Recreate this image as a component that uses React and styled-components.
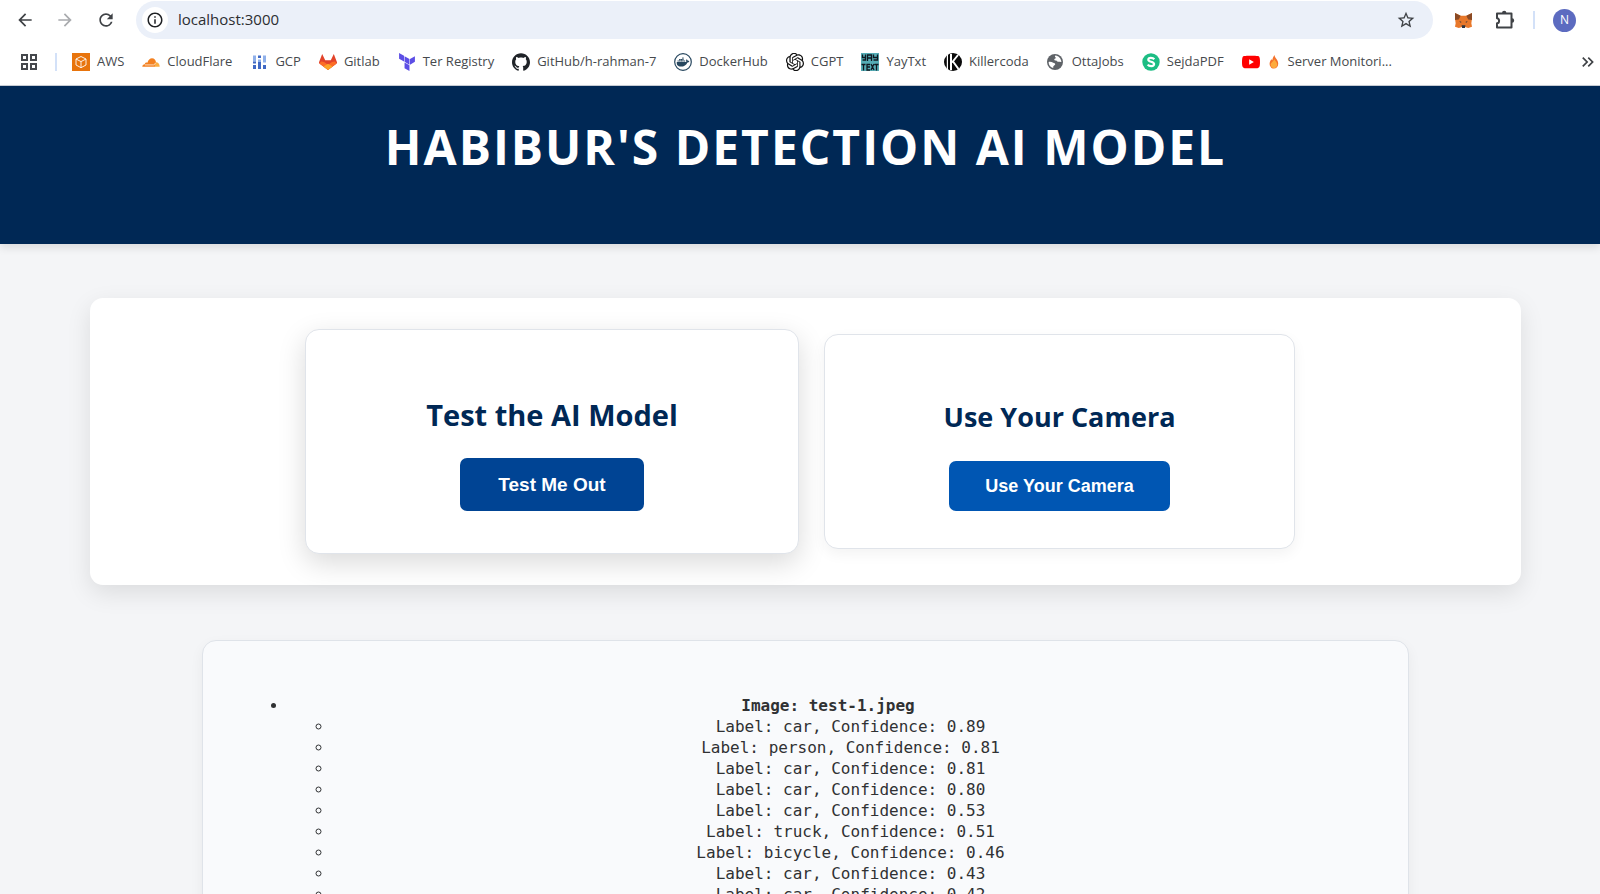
import React from "react";
import styled, { createGlobalStyle } from "styled-components";
import { SiTerraform, SiGithub, SiYoutube } from "react-icons/si";
import { FaDocker } from "react-icons/fa";
import { RiOpenaiFill } from "react-icons/ri";
import { MdStarBorder, MdRefresh, MdArrowBack, MdArrowForward, MdOutlineInfo, MdKeyboardDoubleArrowRight } from "react-icons/md";

const Global = createGlobalStyle`
  * { box-sizing: border-box; }
  html { overflow: hidden; }
  body {
    margin: 0;
    background: #f4f5f7;
    color: #303133;
    font-family: "Open Sans", "Noto Sans", sans-serif;
  }
`;

const Browser = styled.div`
  background: #fff;
  border-bottom: 1px solid #c9ced6;
`;

const Toolbar = styled.div`
  display: flex;
  align-items: center;
  height: 40px;
  padding: 0 24px 0 13px;
`;

const IconButton = styled.button`
  display: flex;
  align-items: center;
  justify-content: center;
  flex: none;
  width: 24px;
  height: 24px;
  margin-right: ${(p) => p.$gap || 0}px;
  padding: 0;
  border: 0;
  background: none;
  color: ${(p) => (p.disabled ? "#a9abae" : "#3f4246")};
  font-size: 20px;
`;

const AddressBar = styled.div`
  display: flex;
  align-items: center;
  flex: 1;
  height: 38px;
  margin-right: 18px;
  padding: 0 15px 0 6px;
  border-radius: 19px;
  background: #ebf0f9;
`;

const SiteInfo = styled.button`
  display: flex;
  align-items: center;
  justify-content: center;
  width: 26px;
  height: 26px;
  padding: 0;
  border: 0;
  border-radius: 50%;
  background: #fff;
  color: #1f2124;
  font-size: 18px;
`;

const Address = styled.input`
  flex: 1;
  min-width: 0;
  padding: 0 0 2px 10px;
  border: 0;
  outline: 0;
  background: none;
  color: #2c2e31;
  font: 15px/20px "Open Sans", "Noto Sans", sans-serif;
`;

const Divider = styled.span`
  flex: none;
  width: 2px;
  height: 18px;
  margin-right: ${(p) => p.$gap}px;
  background: #d3e1f8;
`;

const Avatar = styled.button`
  flex: none;
  width: 23px;
  height: 23px;
  padding: 0;
  border: 0;
  border-radius: 50%;
  background: #5c6bc0;
  color: #fff;
  font: 12px/22px "Open Sans", sans-serif;
`;

const Bookmarks = styled.nav`
  display: flex;
  align-items: center;
  height: 45px;
  padding: 0 0 1px 17px;
`;

const BookmarkList = styled.div`
  display: flex;
  align-items: center;
  gap: 18px;
  flex: 1;
`;

const Bookmark = styled.a`
  display: flex;
  align-items: center;
  gap: 7px;
  color: #46494d;
  font-size: 13px;
  line-height: 20px;
  white-space: nowrap;
  text-decoration: none;

  > svg {
    flex: none;
    width: 18px;
    height: 18px;
  }
`;

const BookmarkLabel = styled.span`
  display: flex;
  align-items: center;
  gap: 7px;
  padding-bottom: 2px;
`;

const Header = styled.header`
  height: 158px;
  padding: 27px 0 0 11px;
  background: #002855;
  box-shadow: 0 4px 8px rgba(0, 0, 0, 0.1);
  text-align: center;
`;

const Title = styled.h1`
  margin: 0;
  color: #fff;
  font-size: 48px;
  line-height: 68px;
  font-weight: 700;
  letter-spacing: 2px;
  text-transform: uppercase;
`;

const Main = styled.main`
  padding: 54px 79px 0 90px;
`;

const Panel = styled.section`
  display: flex;
  align-items: center;
  justify-content: center;
  gap: 25px;
  height: 287px;
  padding-right: 11px;
  border-radius: 13px;
  background: #fff;
  box-shadow: 0 8px 24px rgba(0, 0, 0, 0.1);
`;

const Card = styled.article`
  display: flex;
  flex-direction: column;
  align-items: center;
  justify-content: flex-end;
  width: ${(p) => (p.$raised ? 494 : 471)}px;
  height: ${(p) => (p.$raised ? 225 : 215)}px;
  padding-bottom: ${(p) => (p.$raised ? 42 : 37)}px;
  border: 1px solid #e0e4ea;
  border-radius: 14px;
  background: #fff;
  box-shadow: ${(p) => (p.$raised ? "0 9px 28px rgba(0, 0, 0, 0.15)" : "0 5px 14px rgba(0, 0, 0, 0.05)")};
`;

const CardTitle = styled.h2`
  margin: 0 0 ${(p) => (p.$raised ? 23 : 24)}px;
  color: #002855;
  font-size: ${(p) => (p.$raised ? 29 : 27)}px;
  line-height: 40px;
  font-weight: 700;
`;

const Action = styled.button`
  height: ${(p) => (p.$raised ? 53 : 50)}px;
  padding: 0 ${(p) => (p.$raised ? 38 : 36)}px;
  border: 0;
  border-radius: 7px;
  background: ${(p) => (p.$raised ? "#004494" : "#0056b3")};
  color: #fff;
  font: 700 ${(p) => (p.$raised ? 19 : 18)}px "Liberation Sans", Arial, sans-serif;
`;

const Results = styled.section`
  margin: 55px 112px 0;
  padding: 54px 40px;
  border: 1px solid #dfe3e9;
  border-radius: 14px;
  background: #f9fafc;
  box-shadow: 0 5px 14px rgba(0, 0, 0, 0.05);
`;

const List = styled.ul`
  margin: 0;
  padding-left: 45px;
  text-align: center;
  font: 16px/21px "DejaVu Sans Mono", monospace;
`;

const CubeIcon = () => (
  <svg viewBox="0 0 18 18">
    <rect width="18" height="18" fill="#e8740c" />
    <path d="M9 3.500 14 6v6L9 14.700 4 12V6zM4 6l5 2.600L14 6M9 8.600v6.100" fill="none" stroke="#fff" strokeWidth=".9" />
  </svg>
);
const CloudIcon = () => (
  <svg viewBox="0 0 18 18">
    <path d="M.3 13.800c0-1.500 1-2.500 2.500-2.600.1-1.500 1.500-2.200 2.600-1.500C6.200 6.700 8 5.200 10 5.200c2.300 0 3.800 1.700 4 4l-1 4.600z" fill="#f38020" />
    <path d="m12.400 13.800 1.300-4.500c2.300-.2 4 1.700 4 4.500z" fill="#fbad41" />
    <path d="M3 11.900h8.500c1 0 1.400-.8 1.800-2" fill="none" stroke="#fff" strokeWidth=".7" />
  </svg>
);
const GcpIcon = () => (
  <svg viewBox="0 0 18 18">
    <path d="M3 2.500h3v6H3zM8 6.500h3v3H8zM13 2.500h3v7h-3z" fill="#8fb0ea" />
    <path d="M3 8.500h3v2H3zM3 12h3v4H3zM8 2.500h3v2.500H8zM8 9h3v7H8zM13 12h3v4h-3z" fill="#3f68c4" />
  </svg>
);
const GitlabIcon = () => (
  <svg viewBox="0 0 18 18">
    <path d="M9 17 .6 10.700a1.500 1.500 0 0 1-.5-1.700L3.200 1l3 6.200h5.600l3-6.200 3.100 8a1.500 1.500 0 0 1-.5 1.700z" fill="#e2432a" />
    <path d="M9 17 .5 10.600 2 8.500c3 0 5 1.800 7 3.500 2-1.700 4-3.500 7-3.500l1.500 2.100z" fill="#fc6d26" />
    <path d="M9 17l-4.500-3.400L9 10.800l4.500 2.800z" fill="#fca326" />
  </svg>
);
const YayIcon = () => (
  <svg viewBox="0 0 18 18">
    <rect width="18" height="18" fill="#55acb5" />
    <path d="M1.500 1.500v3h3v-3M4.500 4v3h-3M6.500 8V2h4v6M6.500 5h4M12.500 1.500v3h4v-3M16.500 4v3h-4" fill="none" stroke="#101820" strokeWidth="1.300" />
    <path d="M.5 11.500h4M2.500 11.500v6M9 11.500H6v5.500h3M6 14h3M10 11l3 6M13 11l-3 6M13.500 11.500h4M15.500 11.500v6" fill="none" stroke="#101820" strokeWidth="1.300" />
  </svg>
);
const KillerIcon = () => (
  <svg viewBox="0 0 18 18">
    <circle cx="9" cy="9" r="9" fill="#0b0b0b" />
    <path d="M3.400 2v14" stroke="#fff" strokeWidth="1.200" />
    <path d="M7 1v16M8 9.500 14 2M9 8.500l5.500 7.500" stroke="#fff" strokeWidth="2" fill="none" />
  </svg>
);
const GlobeIcon = () => (
  <svg viewBox="0 0 18 18">
    <circle cx="8" cy="9" r="8" fill="#5f6368" />
    <path d="M8.500 2.600c-1 .6-.6 1.600.2 1.900.3.900-.6 1.300-1.400 1.500-.2 1.300.8 1.600 2 1.500.8.900 1.700 1.500 3 1.200l2.100.4C14.200 5.800 11.800 3 8.500 2.600zM1.600 8.900c1.500-.3 3.300-.1 4.600.9 1 .2 2.200.5 2 1.600-.4 1-1.700 1-1.900 2.100l-.1 1.600C3.500 14.400 1.600 12 1.600 8.900z" fill="#fff" />
  </svg>
);
const SejdaIcon = () => (
  <svg viewBox="0 0 18 18">
    <circle cx="9" cy="9" r="8.700" fill="#1dbd84" />
    <path d="M12.300 6.200C11 4.600 6.300 4 6.300 6.700c0 2.600 5.800 1.600 5.800 4.400 0 2.900-5 2.500-6.400.6" fill="none" stroke="#fff" strokeWidth="2.200" />
  </svg>
);
const FlameIcon = () => (
  <svg viewBox="2 1 14 16" width="14" height="15">
    <path d="M9.500 2c.5 3.500 4 5 4 9.300 0 3.100-2 5.200-4.600 5.200s-4.600-2.100-4.600-5c0-2 1-3.600 1.800-4.800l1.100 1C7.400 6 8 4 9.500 2z" fill="#f4722b" />
    <path d="M9.200 6.500c1 1.900 3.200 3 3.200 5.600 0 2.200-1.500 3.900-3.500 3.900s-3.500-1.600-3.500-3.700c0-2.100 3.100-3.300 3.800-5.800z" fill="#fdab3d" />
  </svg>
);
const DockerIcon = () => (
  <svg viewBox="0 0 18 18">
    <circle cx="9" cy="9" r="8.300" fill="#fff" stroke="#27475f" strokeWidth="1.200" />
    <g transform="translate(2.500 2.500)"><FaDocker size={13} color="#27475f" /></g>
  </svg>
);
const OpenAiIcon = () => (
  <svg viewBox="0 0 18 18">
    <g transform="translate(-2 -2)"><RiOpenaiFill size={22} color="#111" /></g>
  </svg>
);
const FoxIcon = () => (
  <svg viewBox="0 0 20 18" width="19" height="17">
    <path d="M1 1l6 3h6l6-3v6l-.7 5 .7 3.500-4 1.500-3.500-1L11.500 17h-3L8.500 16 5 17l-4-1.500L1.700 12 1 7z" fill="#e8782a" />
    <path d="M1 1l6 3-2 4-4 .5zM19 1l-6 3 2 4 4 .5z" fill="#8b4a24" />
    <path d="M5.500 9.500l2.500 1-1 1zM14.500 9.500l-2.500 1 1 1zM8 14h4l-.5 3h-3z" fill="#2b3440" />
  </svg>
);
const PuzzleIcon = () => (
  <svg viewBox="0 0 20 20" width="20" height="20">
    <path d="M2 3.500h14.500V17.500H2v-4.200c2.800 0 2.800-5.100 0-5.100z" fill="none" stroke="#3f4246" strokeWidth="2" strokeLinejoin="round" />
    <path d="M7 3a2.200 2.200 0 0 1 4.400 0zM17 8.300a2.200 2.200 0 0 1 0 4.400z" fill="#3f4246" />
  </svg>
);
const AppsIcon = () => (
  <svg viewBox="0 0 18 18" width="18" height="18">
    <path d="M2 2h5v5H2zM11 2h5v5h-5zM2 11h5v5H2zM11 11h5v5h-5z" fill="none" stroke="#45484c" strokeWidth="2" />
  </svg>
);

const bookmarks = [
  ["AWS", <CubeIcon />],
  ["CloudFlare", <CloudIcon />],
  ["GCP", <GcpIcon />],
  ["Gitlab", <GitlabIcon />],
  ["Ter Registry", <SiTerraform color="#5c4ee5" />],
  ["GitHub/h-rahman-7", <SiGithub color="#1f2328" />],
  ["DockerHub", <DockerIcon />],
  ["CGPT", <OpenAiIcon />],
  ["YayTxt", <YayIcon />],
  ["Killercoda", <KillerIcon />],
  ["OttaJobs", <GlobeIcon />],
  ["SejdaPDF", <SejdaIcon />],
  ["Server Monitori...", <SiYoutube color="#f00" />, <FlameIcon />],
];

const detections = [
  ["car", "0.89"],
  ["person", "0.81"],
  ["car", "0.81"],
  ["car", "0.80"],
  ["car", "0.53"],
  ["truck", "0.51"],
  ["bicycle", "0.46"],
  ["car", "0.43"],
  ["car", "0.42"],
];

export default function App() {
  return (
    <>
      <Global />
      <Browser>
        <Toolbar>
          <IconButton aria-label="Back" $gap={16}><MdArrowBack /></IconButton>
          <IconButton aria-label="Forward" $gap={17} disabled><MdArrowForward /></IconButton>
          <IconButton aria-label="Reload" $gap={18}><MdRefresh /></IconButton>
          <AddressBar>
            <SiteInfo aria-label="Site information"><MdOutlineInfo /></SiteInfo>
            <Address aria-label="Address" defaultValue="localhost:3000" />
            <IconButton aria-label="Bookmark this page"><MdStarBorder /></IconButton>
          </AddressBar>
          <IconButton aria-label="Wallet" $gap={18}><FoxIcon /></IconButton>
          <IconButton aria-label="Extensions" $gap={16}><PuzzleIcon /></IconButton>
          <Divider $gap={18} />
          <Avatar aria-label="Profile">N</Avatar>
        </Toolbar>
        <Bookmarks aria-label="Bookmarks">
          <IconButton aria-label="All apps" $gap={14}><AppsIcon /></IconButton>
          <Divider $gap={15} />
          <BookmarkList>
            {bookmarks.map(([label, icon, emoji]) => (
              <Bookmark key={label} href="#">
                {icon}
                <BookmarkLabel>{emoji}{label}</BookmarkLabel>
              </Bookmark>
            ))}
          </BookmarkList>
          <IconButton aria-label="More bookmarks"><MdKeyboardDoubleArrowRight /></IconButton>
        </Bookmarks>
      </Browser>
      <Header>
        <Title>Habibur's Detection AI Model</Title>
      </Header>
      <Main>
        <Panel>
          <Card $raised>
            <CardTitle $raised>Test the AI Model</CardTitle>
            <Action $raised>Test Me Out</Action>
          </Card>
          <Card>
            <CardTitle>Use Your Camera</CardTitle>
            <Action>Use Your Camera</Action>
          </Card>
        </Panel>
        <Results>
          <List>
            <li>
              <strong>Image: test-1.jpeg</strong>
              <List>
                {detections.map(([label, score], i) => (
                  <li key={i}>Label: {label}, Confidence: {score}</li>
                ))}
              </List>
            </li>
          </List>
        </Results>
      </Main>
    </>
  );
}
